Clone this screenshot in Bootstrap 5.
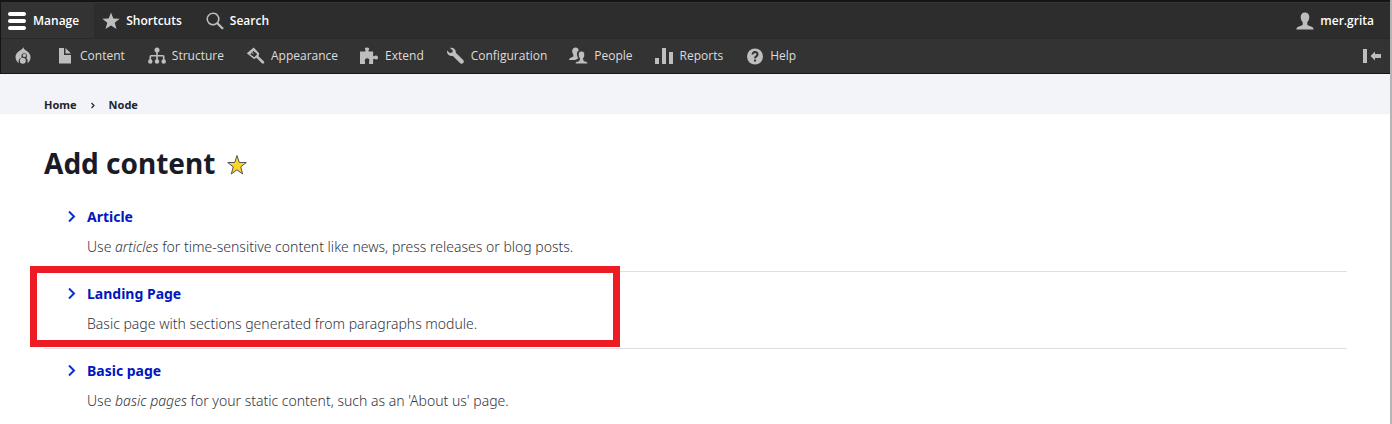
<!DOCTYPE html>
<html lang="en">
<head>
<meta charset="utf-8">
<meta name="viewport" content="width=device-width, initial-scale=1">
<title>Add content</title>
<link href="https://cdn.jsdelivr.net/npm/bootstrap@5.3.0/dist/css/bootstrap.min.css" rel="stylesheet">
<style>
  body { font-family: "Noto Sans", "Open Sans", sans-serif; font-size: 14px; line-height: 20px; color: #55565b; background: #fff; border-right: 2px solid #b5b5b5; min-height: 100vh; }
  .toolbar { font-family: "Open Sans", sans-serif; font-size: 12px; line-height: 20px; border-top: 2px solid #151515; border-bottom: 1px solid #151515; border-left: 1px solid #151515; }
  .toolbar-bar { background: #2d2d2d; height: 36px; font-weight: 600; border-top: 1px solid #353535; }
  .toolbar-bar a { color: #fff; gap: 6px; }
  .toolbar-bar .tab-on { background: #333; padding: 0 15px 0 6px; }
  .toolbar-tray { background: #333; height: 35px; border-top: 1px solid #292929; }
  .toolbar-tray ul { gap: 21px; padding-left: 12px; }
  .toolbar-tray a { color: #ddd; gap: 6px; }
  .toolbar svg { fill: #bebebe; flex: none; }
  .toolbar .tab-on svg { fill: #fff; }
  .toolbar button svg { display: block; }
  .region-crumbs { background: #f3f4f9; height: 40px; padding: 21px 44px 0; font-size: 11px; font-weight: 700; }
  .region-crumbs a { color: #232429; }
  .crumb-sep { width: 4px; margin: 0 14px; }
  .region-main { padding: 29px 43px 0 44px; }
  .page-name { font-size: 28px; line-height: 40px; font-weight: 700; color: #1b1b28; }
  .page-head { gap: 9px; margin-bottom: 12px; }
  .type-item { min-height: 77px; padding: 12px 23px 0; border-bottom: 1px solid #dedfe4; }
  .type-item:last-child { border-bottom: 0; }
  .type-link { color: #0017bd; font-weight: 700; gap: 11px; }
  .type-link svg { margin-top: 4px; }
  .type-text { font-weight: 300; color: #33343c; padding-left: 20px; margin-top: 10px; }
  .marker { top: -6px; left: -14px; width: 590px; height: 81px; border: 7px solid #ed1c24; pointer-events: none; }
</style>
</head>
<body>
<header class="toolbar">
  <nav class="toolbar-bar d-flex" aria-label="Toolbar">
    <a class="tab-on d-flex align-items-center text-decoration-none" href="#"><svg width="20" height="20" viewBox="0 0 20 20"><rect x="1" y="1" width="18" height="4" rx="2"/><rect x="1" y="8" width="18" height="4" rx="2"/><rect x="1" y="15" width="18" height="4" rx="2"/></svg>Manage</a>
    <a class="d-flex align-items-center text-decoration-none ms-2" href="#"><svg width="18" height="18" viewBox="0 0 18 18"><path d="M9 .5l2.300 6 6.400.2-5 4 1.800 6.300L9 13.400l-5.500 3.600 1.800-6.300-5-4 6.400-.2z"/></svg>Shortcuts</a>
    <a class="d-flex align-items-center text-decoration-none ms-4" href="#"><svg width="18" height="18" viewBox="0 0 18 18"><path fill-rule="evenodd" d="M7 .5a6.500 6.500 0 1 0 3.800 11.800l4.700 4.700q1 .6 1.700-.1.600-.8 0-1.500l-4.800-4.700A6.500 6.500 0 0 0 7 .5zM7 2a5 5 0 1 1 0 10A5 5 0 0 1 7 2z"/></svg>Search</a>
    <a class="d-flex align-items-center text-decoration-none ms-auto me-3" href="#"><svg width="18" height="18" viewBox="0 0 18 18"><path d="M9 .5c3 0 4.500 2 4.300 5-.1 2-1 3.500-2 4.800v2c0 1 1 1.300 3 1.900 2 .6 3.200 1.200 3.400 3.300H.3c.2-2.100 1.400-2.700 3.400-3.300 2-.6 3-.9 3-1.900v-2c-1-1.300-1.900-2.800-2-4.800C4.500 2.500 6 .5 9 .5z"/></svg>mer.grita</a>
  </nav>
  <nav class="toolbar-tray d-flex align-items-center" aria-label="Administration menu">
    <ul class="list-unstyled d-flex mb-0">
      <li><a class="d-flex align-items-center text-decoration-none" href="#" aria-label="Tools"><svg width="20" height="20" viewBox="0 0 20 20"><path d="M10.500 1c.2 2.200 1.500 2.800 3.500 4.200 2 1.300 3.500 3.300 3.500 6 0 3-1.400 4.800-3 6 .4-2.300.2-4.200-1.200-5.200 1.500-2 .6-4.600-1.800-4.800-2.700 0-3.700 2.500-2.600 4.300-2.800.7-3.900 3-3.100 5.700C3.900 15.700 2.500 13.600 2.500 11c0-3 1.700-4.600 4-6.300 1.700-1.200 3.600-1.800 4-3.700z"/><circle cx="11.400" cy="9.400" r="1.700"/><circle cx="9.800" cy="14.800" r="3"/></svg></a></li>
      <li><a class="d-flex align-items-center text-decoration-none" href="#"><svg width="20" height="20" viewBox="0 0 20 20"><path d="M5 2h5v7h7v8.500H5zM11.500 2L17 7.500h-5.500z"/></svg>Content</a></li>
      <li><a class="d-flex align-items-center text-decoration-none" href="#"><svg width="20" height="20" viewBox="0 0 20 20"><path d="M10.200 5h1.600v4H17q1.500 0 1.500 1.500V14h-1.600v-3.500h-5.100V14h-1.600v-3.500H5.100V14H3.500v-3.500Q3.500 9 5 9h5.200z"/><circle cx="11" cy="4" r="2.500"/><circle cx="4.300" cy="15.500" r="2.200"/><circle cx="11" cy="15.500" r="2.200"/><circle cx="17.700" cy="15.500" r="2.200"/></svg>Structure</a></li>
      <li><a class="d-flex align-items-center text-decoration-none" href="#"><svg width="20" height="20" viewBox="0 0 20 20"><path fill-rule="evenodd" d="M8.700 1.500l5.600 6-.8 2.800 5.300 5q.9 1.100.1 2-.9.800-2 0l-5.200-5.200-2.800.8-7.100-5.600zM8.600 4.700L5.200 8.200l4 3.100 3-3z"/><path d="M8.300 4.300l1.500 1.600M6.500 6.100l2 2" stroke="#bebebe"/></svg>Appearance</a></li>
      <li><a class="d-flex align-items-center text-decoration-none" href="#"><svg width="20" height="20" viewBox="0 0 20 20"><path d="M1 5.500h5c1-.2.800-.9.300-1.500C5.300 2.700 6 1.500 8 1.500s2.800 1.200 1.800 2.500c-.5.6-.7 1.300.3 1.500h4v4c.2 1 .9 1 1.600.4 1.500-1 3.300-.4 3.300 1.600s-1.800 2.600-3.300 1.600c-.7-.6-1.400-.6-1.600.4V18h-4v-2c.8-2.500-.2-3.700-1.900-3.700S5.300 13.500 6 16v2H1z"/></svg>Extend</a></li>
      <li><a class="d-flex align-items-center text-decoration-none" href="#"><svg width="20" height="20" viewBox="0 0 20 20"><path d="M5 2c3-.8 6.200 1.200 5.800 4.800l7.400 7.300c2 2-.9 5-3 3.100L7.900 10C4.500 10.600 1.500 8 2 4.500l2.800 2.600 2.500-.5.5-2.200z"/></svg>Configuration</a></li>
      <li><a class="d-flex align-items-center text-decoration-none" href="#"><svg width="20" height="20" viewBox="0 0 20 20"><path d="M7.500 1.500c2.300 0 3.300 1.400 3.200 3.300-1.400.6-2 2-1.700 4 .1 1.200.5 2.300 1.200 3.100 0 1-1.700 1.200-3.200 2.100H1c.1-1.500.8-2 2.300-2.500 1.600-.5 2.100-.7 2.100-1.400V8.700C3.900 7 3.300 1.500 7.500 1.500z"/><path d="M13.500 5c4.200 0 3.800 5.300 2.200 7v2c0 .8.600.9 2 1.300 1.600.5 2.200 1.200 2.300 2.700H7c.1-1.500.7-2.200 2.300-2.700 1.400-.4 2-.5 2-1.300v-2C9.700 10.300 9.300 5 13.500 5z" stroke="#333"/></svg>People</a></li>
      <li><a class="d-flex align-items-center text-decoration-none" href="#"><svg width="20" height="20" viewBox="0 0 20 20"><path d="M1 12h4v6H1zM8 2h4v16H8zM15 6h4v12h-4z"/></svg>Reports</a></li>
      <li><a class="d-flex align-items-center text-decoration-none" href="#"><svg width="20" height="20" viewBox="0 0 20 20"><circle cx="11" cy="10.500" r="8"/><path d="M8.500 8.500c0-3.300 5-3.200 5 0 0 1.900-2.500 1.800-2.500 3.700" fill="none" stroke="#333" stroke-width="2"/><path fill="#333" d="M10 13.500h2v2h-2z"/></svg>Help</a></li>
    </ul>
    <button class="btn p-0 border-0 ms-auto me-2" type="button" aria-label="Vertical orientation"><svg width="20" height="16" viewBox="0 0 20 16"><path d="M1 1h4v14H1zM8.500 8l4.500-4.500V6h6v4h-6v2.500z"/></svg></button>
  </nav>
</header>
<nav class="region-crumbs d-flex" aria-label="Breadcrumb">
  <a class="text-decoration-none" href="#">Home</a>
  <svg class="crumb-sep" height="20" viewBox="0 0 4 20"><path d="M.5 8L3 10.500.5 13" fill="none" stroke="#232429" stroke-width="1.200"/></svg>
  <a class="text-decoration-none" href="#">Node</a>
</nav>
<main class="region-main">
  <div class="page-head d-flex align-items-center">
    <h1 class="page-name mb-0">Add content</h1>
    <a class="d-flex mt-1" href="#" aria-label="Remove from shortcuts"><svg width="26" height="22" viewBox="0 0 26 22"><path d="M13 1.500l2.300 7h7l-5.600 4.400 2 7.100-5.700-4.200L7.300 20l2-7.100-5.600-4.400h7z" fill="#fdd32d" stroke="#55554b"/></svg></a>
  </div>
  <ul class="list-unstyled mb-0">
    <li class="type-item">
      <a class="type-link d-inline-flex text-decoration-none" href="#"><svg width="9" height="11" viewBox="0 0 9 11"><path d="M2 .5l5 5-5 5" fill="none" stroke="#0c2fd0" stroke-width="2"/></svg>Article</a>
      <div class="type-text">Use <em>articles</em> for time-sensitive content like news, press releases or blog posts.</div>
    </li>
    <li class="type-item position-relative">
      <a class="type-link d-inline-flex text-decoration-none" href="#"><svg width="9" height="11" viewBox="0 0 9 11"><path d="M2 .5l5 5-5 5" fill="none" stroke="#0c2fd0" stroke-width="2"/></svg>Landing Page</a>
      <div class="type-text">Basic page with sections generated from paragraphs module.</div>
      <div class="marker position-absolute"></div>
    </li>
    <li class="type-item">
      <a class="type-link d-inline-flex text-decoration-none" href="#"><svg width="9" height="11" viewBox="0 0 9 11"><path d="M2 .5l5 5-5 5" fill="none" stroke="#0c2fd0" stroke-width="2"/></svg>Basic page</a>
      <div class="type-text">Use <em>basic pages</em> for your static content, such as an 'About us' page.</div>
    </li>
  </ul>
</main>
<script src="https://cdn.jsdelivr.net/npm/bootstrap@5.3.0/dist/js/bootstrap.bundle.min.js"></script>
</body>
</html>
